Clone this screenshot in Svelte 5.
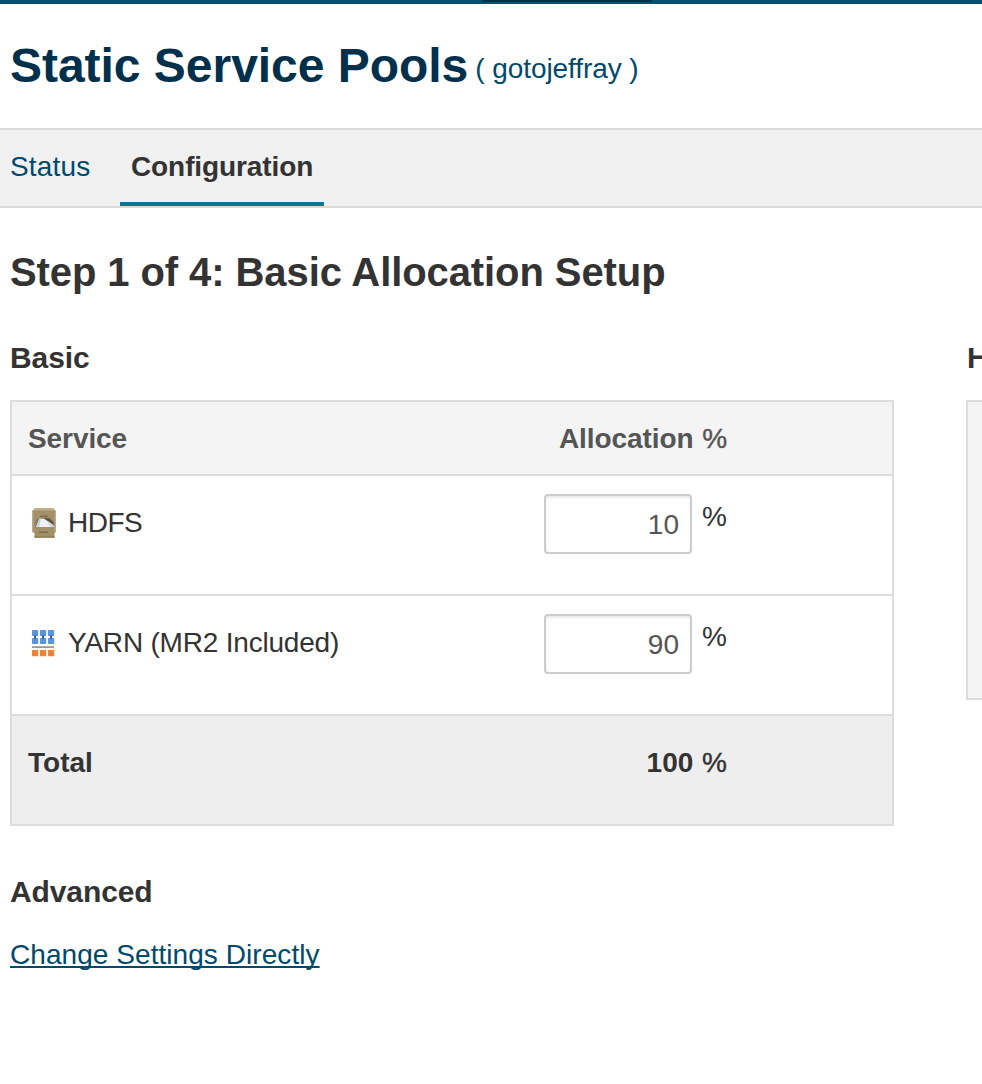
<script>
  let services = $state([
    { id: 'hdfs', name: 'HDFS', allocation: 10 },
    { id: 'yarn', name: 'YARN (MR2 Included)', allocation: 90 }
  ]);
  let total = $derived(services.reduce((sum, s) => sum + Number(s.allocation), 0));
</script>

<div class="page">
  <div class="topbar"><span></span></div>

  <header>
    <h1>Static Service Pools</h1>
    <a class="cluster" href="#cluster">( gotojeffray )</a>
  </header>

  <nav>
    <a class="tab" href="#status">Status</a>
    <a class="tab active" href="#configuration">Configuration</a>
  </nav>

  <main>
    <h2>Step 1 of 4: Basic Allocation Setup</h2>
    <div class="columns">
      <section class="left">
        <h3>Basic</h3>
        <div class="table">
          <div class="row head">
            <span>Service</span>
            <span class="num">Allocation <i>%</i></span>
          </div>
          {#each services as service (service.id)}
            <div class="row item">
              <div class="service">
                {#if service.id === 'hdfs'}
                  <svg class="crate" width="30" height="32" viewBox="0 0 30 32">
                    <path d="M7 1h18l3 3.500V25l-1.500 1v4.700h-20V26L4 25V4.500z" fill="#a39069" />
                    <path d="M7 1h18l2 2.500H5z" fill="#bfb08b" />
                    <path d="M4 5h1.500v20H4zM26.500 5H28v20h-1.500z" fill="#b9aa84" />
                    <path d="M12 8.500h8v1.500h-8z" fill="#7e6d4a" />
                    <path d="M8 13l3-2h10l4.500 3v6H7z" fill="#8b7955" />
                    <path d="M16 11h5l5 5v3l-8-4z" fill="#5f5440" />
                    <path d="M8 20l3.500-8.500 5 .5 9 6v2z" fill="#eef1f6" />
                    <path d="M8 20l3.500-8.500 1.500.2L11 20z" fill="#b9d9ea" />
                    <path d="M19 15l6.500 3.500V20H23z" fill="#d2d3d9" />
                    <path d="M11 24.500h9V26h-9z" fill="#7e6d4a" />
                    <path d="M6.500 29h20v1.700h-20z" fill="#94835d" />
                  </svg>
                {:else}
                  <svg width="30" height="32" viewBox="0 0 30 32">
                    <path d="M4 18.200h22v1.800H4z" fill="#999" />
                    {#each [4, 12, 20] as x}
                      <rect {x} y="2" width="6.200" height="6" rx=".7" fill="#5a95e3" />
                      <rect {x} y="10" width="6.200" height="6" rx=".7" fill="#5a95e3" />
                      <rect x={x + 2} y="7.300" width="2.200" height="3.400" fill="#3c638f" />
                      <rect {x} y="22" width="6.200" height="6.200" rx=".7" fill="#ef8134" />
                    {/each}
                  </svg>
                {/if}
                <span class={service.id}>{service.name}</span>
              </div>
              <div class="field">
                <input type="text" aria-label={service.name} bind:value={service.allocation} />
                <span>%</span>
              </div>
            </div>
          {/each}
          <div class="row total">
            <span>Total</span>
            <span class="num">{total} <i>%</i></span>
          </div>
        </div>
        <h3 class="advanced">Advanced</h3>
        <a class="direct" href="#settings">Change Settings Directly</a>
      </section>
      <section class="right">
        <h3>H</h3>
        <div class="panel"></div>
      </section>
    </div>
  </main>
</div>

<style>
  :global(body) { margin: 0; background: #fff; }
  .page {
    height: 1084px;
    overflow: hidden;
    font: 28px/36px "Liberation Sans", Arial, sans-serif;
    color: #333;
  }
  .page *, .page { box-sizing: border-box; }
  h1, h2, h3 { margin: 0; font-weight: bold; }
  a { color: #00496b; text-decoration: none; }
  .topbar { height: 4px; background: #074e70; }
  .topbar span { display: block; width: 170px; height: 2px; margin-left: 482px; background: #032f4a; }
  header { display: flex; align-items: flex-start; height: 124px; padding: 32px 10px 0; }
  h1 { font-size: 48px; line-height: 60px; color: #00304b; letter-spacing: -0.03px; white-space: nowrap; }
  .cluster { margin: 15px 0 0 7px; white-space: nowrap; letter-spacing: -0.08px; }
  nav { display: flex; gap: 20px; height: 80px; background: #f0f0f0; border: solid #dcdcdc; border-width: 2px 0; }
  .tab { height: 76px; padding: 19px 10px 0; }
  .tab:first-child { width: 100px; letter-spacing: 0.15px; }
  .active { width: 204px; padding-left: 11px; color: #333; font-weight: bold; letter-spacing: -0.1px; border-bottom: 4px solid #107496; }
  main { padding: 40px 0 0 10px; }
  h2 { font-size: 40px; line-height: 48px; letter-spacing: -0.09px; white-space: nowrap; }
  .columns { display: flex; gap: 72px; margin-top: 44px; }
  .left { flex: 0 0 884px; }
  .right { flex: 0 0 400px; }
  .right h3 { padding-left: 1px; }
  h3 { font-size: 30px; line-height: 36px; padding-bottom: 24px; letter-spacing: -0.1px; }
  .table { border: 2px solid #dcdcdc; }
  .row { display: grid; grid-template-columns: 532px 184px; }
  .row > :first-child { padding-left: 16px; }
  .row + .row { border-top: 2px solid #dcdcdc; }
  .num { padding-right: 1px; text-align: right; }
  i { font-style: normal; font-weight: normal; margin-left: 1px; -webkit-text-stroke: 0.4px currentColor; }
  .head { height: 72px; padding-top: 19px; background: #f4f4f4; color: #555; font-weight: bold; letter-spacing: -0.08px; }
  .item { height: 120px; padding-top: 18px; }
  .service { display: flex; gap: 10px; padding-top: 11px; white-space: nowrap; }
  .service svg { margin-top: 3px; }
  .service .crate { margin-top: 2px; filter: blur(0.4px); }
  .hdfs { letter-spacing: -0.5px; }
  .yarn { letter-spacing: -0.2px; }
  .field { display: flex; align-items: flex-start; gap: 10px; }
  input {
    width: 148px; height: 60px; padding: 1px 11px 0;
    font: inherit; text-align: right; color: #555;
    background: #fff; border: 2px solid #ccc; border-radius: 4px;
    box-shadow: inset 0 2px 2px rgba(0, 0, 0, 0.075);
    outline: none;
  }
  .field span { padding-top: 5px; }
  .total { height: 110px; padding-top: 29px; background: #eee; font-weight: bold; }
  .advanced { margin-top: 48px; padding: 0; }
  .direct { display: inline-block; margin-top: 27px; letter-spacing: 0.06px; text-decoration: underline; text-decoration-thickness: 2px; text-underline-offset: 2px; text-decoration-skip-ink: none; }
  .panel { height: 300px; background: #f4f4f4; border: 2px solid #dcdcdc; }
</style>
